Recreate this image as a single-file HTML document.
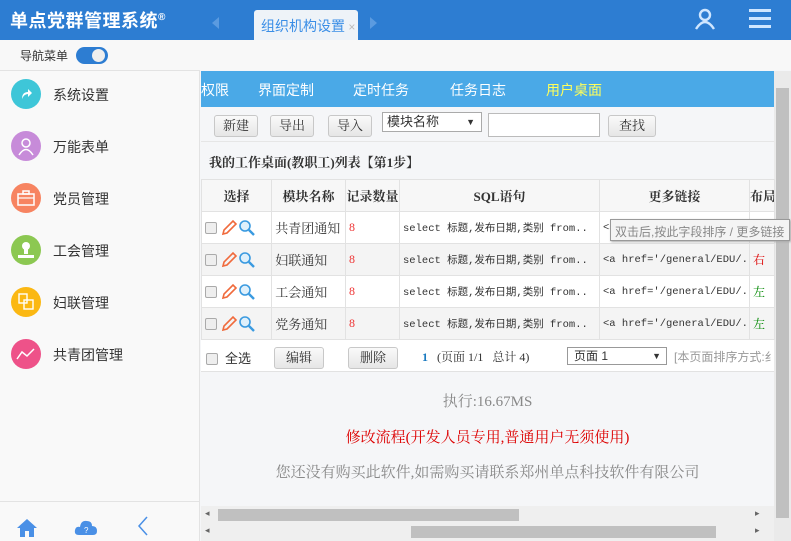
<!DOCTYPE html>
<html><head><meta charset="utf-8"><style>
*{margin:0;padding:0;box-sizing:border-box}
body{width:791px;height:541px;overflow:hidden;font-family:"Liberation Sans","Noto Sans CJK SC",sans-serif;background:#f5f6f8;position:relative;font-size:13px;color:#333}
.abs{position:absolute}
#hdr{left:0;top:0;width:791px;height:40px;background:#2d7dd2}
#title{left:10px;top:7px;color:#fff;font-size:18px;font-weight:bold;letter-spacing:0.5px}
#tab{left:254px;top:10px;width:104px;height:30px;background:#eef3f8;border-radius:3px 3px 0 0;color:#3a8ee6;font-size:14px;padding:6px 0 0 7px}
#bar{left:0;top:40px;width:791px;height:30px;background:#f8f8f8}
#side{left:0;top:70px;width:200px;height:471px;background:#f9f9f9;border-top:1px solid #e3e3e3;border-right:1px solid #e3e3e3}
.mi{position:absolute;left:11px;width:180px;height:30px}
.mi .c{position:absolute;left:0;top:0;width:30px;height:30px;border-radius:50%}
.mi span{position:absolute;left:42px;top:6px;font-size:14px;color:#333}
#nav{left:201px;top:71px;width:573px;height:36px;background:#4aa9e7;color:#fff;font-size:14px}
#nav span{position:absolute;top:9px}
.btn{position:absolute;height:22px;border:1px solid #c8c8c8;border-radius:3px;background:linear-gradient(#fafafa,#e6e6e6);font-size:13px;text-align:center;line-height:20px;font-family:"Liberation Serif","Noto Serif CJK SC",serif}
table{position:absolute;left:201px;top:179px;width:573px;table-layout:fixed;border-collapse:collapse;font-size:12px;font-family:"Liberation Serif","Noto Serif CJK SC",serif}
td,th{border:1px solid #e2e2e2;height:32px;padding:0;white-space:nowrap;overflow:hidden}
th{font-weight:bold;font-size:13px;background:#f7f7f7}
tr.r td{background:#fff}
tr.g td{background:#f4f4f4}
.cb{display:inline-block;width:12px;height:12px;border:1px solid #aaa;border-radius:2px;background:#eee;vertical-align:middle}
.mono{font-family:"Liberation Mono","Noto Sans CJK SC",monospace;font-size:10.5px;padding-left:3px}
.sb{background:#c0c0c0}
.ic{vertical-align:middle}
</style></head><body>
<div id="hdr" class="abs"></div>
<div id="title" class="abs">单点党群管理系统<sup style="font-size:10px">®</sup></div>
<div class="abs" style="left:212px;top:17px;width:0;height:0;border:6px solid transparent;border-right:7px solid #5b9be0;border-left:0"></div>
<div class="abs" style="left:370px;top:17px;width:0;height:0;border:6px solid transparent;border-left:7px solid #5b9be0;border-right:0"></div>
<div id="tab" class="abs">组织机构设置<span style="color:#bbb;font-size:12px"> ×</span></div>
<svg class="abs" style="left:693px;top:7px" width="24" height="24" viewBox="0 0 24 24"><circle cx="12" cy="8" r="5" fill="none" stroke="#cfe6ff" stroke-width="2.4"/><path d="M3 22 Q12 8 21 22" fill="none" stroke="#cfe6ff" stroke-width="2.4"/></svg>
<div class="abs" style="left:749px;top:9px;width:22px;height:3px;background:#cfe6ff;box-shadow:0 8px 0 #cfe6ff,0 16px 0 #cfe6ff"></div>
<div id="bar" class="abs"></div>
<div class="abs" style="left:20px;top:47px;font-size:12px">导航菜单</div>
<div class="abs" style="left:76px;top:47px;width:32px;height:17px;border-radius:9px;background:#2d7dd2"></div>
<div class="abs" style="left:92px;top:49px;width:13px;height:13px;border-radius:50%;background:#eee"></div>
<div id="side" class="abs">
<div class="mi" style="top:8px"><div class="c" style="background:#3ec6d8"></div><svg class="abs" style="left:8px;top:8px" width="14" height="14" viewBox="0 0 14 14"><path d="M3 12 Q3 5 9 5 L9 2 L13 6 L9 10 L9 7 Q5 7 3 12Z" fill="#fff"/></svg><span>系统设置</span></div>
<div class="mi" style="top:60px"><div class="c" style="background:#c78bd9"></div><svg class="abs" style="left:6px;top:5px" width="18" height="20" viewBox="0 0 18 20"><circle cx="9" cy="7" r="4" fill="none" stroke="#fff" stroke-width="1.5"/><path d="M2 19 Q9 8 16 19" fill="none" stroke="#fff" stroke-width="1.5"/></svg><span>万能表单</span></div>
<div class="mi" style="top:112px"><div class="c" style="background:#f78461"></div><svg class="abs" style="left:6px;top:7px" width="18" height="16" viewBox="0 0 18 16"><rect x="1" y="4" width="16" height="11" fill="none" stroke="#fff" stroke-width="1.5"/><rect x="6" y="1" width="6" height="3" fill="none" stroke="#fff" stroke-width="1.5"/><line x1="1" y1="8" x2="17" y2="8" stroke="#fff" stroke-width="1.2"/></svg><span>党员管理</span></div>
<div class="mi" style="top:164px"><div class="c" style="background:#8cc852"></div><svg class="abs" style="left:6px;top:5px" width="18" height="20" viewBox="0 0 18 20"><circle cx="9" cy="6" r="4" fill="#fff"/><rect x="7" y="9" width="4" height="5" fill="#fff"/><rect x="1" y="15" width="16" height="3" fill="#fff"/></svg><span>工会管理</span></div>
<div class="mi" style="top:216px"><div class="c" style="background:#fbb813"></div><svg class="abs" style="left:7px;top:6px" width="16" height="18" viewBox="0 0 16 18"><rect x="1" y="1" width="8" height="9" fill="none" stroke="#fff" stroke-width="1.4"/><rect x="6" y="7" width="9" height="9" fill="none" stroke="#fff" stroke-width="1.4"/></svg><span>妇联管理</span></div>
<div class="mi" style="top:268px"><div class="c" style="background:#ee5289"></div><svg class="abs" style="left:5px;top:8px" width="20" height="14" viewBox="0 0 20 14"><path d="M1 12 L6 5 L11 9 L18 2" fill="none" stroke="#fff" stroke-width="1.5"/></svg><span>共青团管理</span></div>
<div class="abs" style="left:0;top:430px;width:199px;height:1px;background:#e3e3e3"></div>
<svg class="abs" style="left:16px;top:447px" width="22" height="20" viewBox="0 0 22 20"><path d="M11 1 L21 10 L18 10 L18 19 L13 19 L13 13 L9 13 L9 19 L4 19 L4 10 L1 10Z" fill="#4a90e6"/></svg>
<svg class="abs" style="left:74px;top:446px" width="24" height="20" viewBox="0 0 24 20"><path d="M5 18 Q0 18 1 13 Q2 9 6 10 Q7 3 13 4 Q18 4 18 9 Q23 9 23 14 Q23 18 19 18Z" fill="#4a90e6"/><text x="10" y="16" font-size="8" fill="#fff" font-family="Liberation Sans">?</text></svg>
<svg class="abs" style="left:137px;top:444px" width="12" height="22" viewBox="0 0 12 22"><path d="M10 2 L2 11 L10 20" fill="none" stroke="#4a90e6" stroke-width="1.5"/></svg>
</div>
<div id="nav" class="abs"><span style="left:0">权限</span><span style="left:57px">界面定制</span><span style="left:152px">定时任务</span><span style="left:249px">任务日志</span><span style="left:345px;color:#ffff5a">用户桌面</span></div>
<div class="abs" style="left:774px;top:71px;width:17px;height:470px;background:#eaeaea"></div>
<div class="abs sb" style="left:776px;top:88px;width:13px;height:430px"></div>
<div class="btn" style="left:214px;top:115px;width:44px">新建</div>
<div class="btn" style="left:270px;top:115px;width:44px">导出</div>
<div class="btn" style="left:328px;top:115px;width:44px">导入</div>
<div class="abs" style="left:382px;top:112px;width:100px;height:20px;border:1px solid #aaa;background:#fff;font-size:13px;padding-left:4px;line-height:18px">模块名称<span style="position:absolute;right:6px;font-size:9px">▼</span></div>
<div class="abs" style="left:488px;top:113px;width:112px;height:24px;border:1px solid #bbb;background:#fff"></div>
<div class="btn" style="left:608px;top:115px;width:48px">查找</div>
<div class="abs" style="left:201px;top:141px;width:573px;height:1px;background:#e6e6e6"></div>
<div class="abs" style="left:209px;top:152px;font-size:13px;font-weight:bold;font-family:'Liberation Serif','Noto Serif CJK SC',serif">我的工作桌面(教职工)列表【第1步】</div>
<table>
<colgroup><col style="width:70px"><col style="width:74px"><col style="width:54px"><col style="width:200px"><col style="width:150px"><col style="width:25px"></colgroup>
<tr><th>选择</th><th>模块名称</th><th>记录数量</th><th>SQL语句</th><th>更多链接</th><th>布局</th></tr>
<tr class="r"><td>&nbsp;<span class="cb"></span> <svg class="ic" width="18" height="18" viewBox="0 0 18 18"><path d="M3 15 L4 11 L13 2 L16 5 L7 14Z" fill="none" stroke="#f06a3c" stroke-width="1.6"/></svg><svg class="ic" width="18" height="18" viewBox="0 0 18 18"><circle cx="7" cy="7" r="5" fill="#dff0fb" stroke="#3a9ae0" stroke-width="1.6"/><path d="M11 11 L16 16" stroke="#3a9ae0" stroke-width="2.4"/></svg></td><td style="font-size:13px">&nbsp;共青团通知</td><td style="color:#e33">&nbsp;8</td><td class="mono">select 标题,发布日期,类别 from..</td><td class="mono">&lt;a href='/general/EDU/..</td><td style="color:#d00">&nbsp;右</td></tr>
<tr class="g"><td>&nbsp;<span class="cb"></span> <svg class="ic" width="18" height="18" viewBox="0 0 18 18"><path d="M3 15 L4 11 L13 2 L16 5 L7 14Z" fill="none" stroke="#f06a3c" stroke-width="1.6"/></svg><svg class="ic" width="18" height="18" viewBox="0 0 18 18"><circle cx="7" cy="7" r="5" fill="#dff0fb" stroke="#3a9ae0" stroke-width="1.6"/><path d="M11 11 L16 16" stroke="#3a9ae0" stroke-width="2.4"/></svg></td><td style="font-size:13px">&nbsp;妇联通知</td><td style="color:#e33">&nbsp;8</td><td class="mono">select 标题,发布日期,类别 from..</td><td class="mono">&lt;a href='/general/EDU/..</td><td style="color:#d00">&nbsp;右</td></tr>
<tr class="r"><td>&nbsp;<span class="cb"></span> <svg class="ic" width="18" height="18" viewBox="0 0 18 18"><path d="M3 15 L4 11 L13 2 L16 5 L7 14Z" fill="none" stroke="#f06a3c" stroke-width="1.6"/></svg><svg class="ic" width="18" height="18" viewBox="0 0 18 18"><circle cx="7" cy="7" r="5" fill="#dff0fb" stroke="#3a9ae0" stroke-width="1.6"/><path d="M11 11 L16 16" stroke="#3a9ae0" stroke-width="2.4"/></svg></td><td style="font-size:13px">&nbsp;工会通知</td><td style="color:#e33">&nbsp;8</td><td class="mono">select 标题,发布日期,类别 from..</td><td class="mono">&lt;a href='/general/EDU/..</td><td style="color:#080">&nbsp;左</td></tr>
<tr class="g"><td>&nbsp;<span class="cb"></span> <svg class="ic" width="18" height="18" viewBox="0 0 18 18"><path d="M3 15 L4 11 L13 2 L16 5 L7 14Z" fill="none" stroke="#f06a3c" stroke-width="1.6"/></svg><svg class="ic" width="18" height="18" viewBox="0 0 18 18"><circle cx="7" cy="7" r="5" fill="#dff0fb" stroke="#3a9ae0" stroke-width="1.6"/><path d="M11 11 L16 16" stroke="#3a9ae0" stroke-width="2.4"/></svg></td><td style="font-size:13px">&nbsp;党务通知</td><td style="color:#e33">&nbsp;8</td><td class="mono">select 标题,发布日期,类别 from..</td><td class="mono">&lt;a href='/general/EDU/..</td><td style="color:#080">&nbsp;左</td></tr>
</table>
<div class="abs" style="left:201px;top:340px;width:573px;height:32px;background:#fff;border-bottom:1px solid #e2e2e2"></div>
<div class="abs" style="left:206px;top:350px"><span class="cb"></span></div>
<div class="abs" style="left:225px;top:348px;font-size:13px">全选</div>
<div class="btn" style="left:274px;top:347px;width:50px">编辑</div>
<div class="btn" style="left:348px;top:347px;width:50px">删除</div>
<div class="abs" style="left:422px;top:348px;font-size:12px;font-family:'Liberation Serif','Noto Serif CJK SC',serif"><b style="color:#1a7ac0">1</b>&nbsp;&nbsp; (页面 1/1&nbsp;&nbsp; 总计 4)</div>
<div class="abs" style="left:567px;top:347px;width:100px;height:18px;border:1px solid #999;background:#fff;font-size:12px;padding-left:6px;line-height:16px">页面 1<span style="position:absolute;right:5px;font-size:9px">▼</span></div>
<div class="abs" style="left:674px;top:348px;font-size:12px;color:#999;white-space:nowrap;width:100px;overflow:hidden">[本页面排序方式:纟</div>
<div class="abs" style="left:610px;top:219px;width:180px;height:22px;background:#f4f4f4;border:1px solid #999;box-shadow:1px 1px 2px #aaa;font-size:12px;color:#888;padding:3px 0 0 4px;white-space:nowrap">双击后,按此字段排序 / 更多链接</div>
<div class="abs" style="left:201px;top:390px;width:573px;text-align:center;font-size:15px;color:#888;font-family:'Liberation Serif','Noto Serif CJK SC',serif">执行:16.67MS</div>
<div class="abs" style="left:201px;top:426px;width:573px;text-align:center;font-size:15px;color:#d00;font-family:'Liberation Serif','Noto Serif CJK SC',serif">修改流程(开发人员专用,普通用户无须使用)</div>
<div class="abs" style="left:201px;top:461px;width:573px;text-align:center;font-size:15px;color:#888;font-family:'Liberation Serif','Noto Serif CJK SC',serif">您还没有购买此软件,如需购买请联系郑州单点科技软件有限公司</div>
<div class="abs" style="left:201px;top:506px;width:573px;height:35px;background:#efefef"></div>
<div class="abs sb" style="left:218px;top:509px;width:301px;height:12px"></div>
<div class="abs sb" style="left:411px;top:526px;width:305px;height:12px"></div>
<div class="abs" style="left:205px;top:508px;font-size:9px;color:#666">◂</div>
<div class="abs" style="left:205px;top:525px;font-size:9px;color:#666">◂</div>
<div class="abs" style="left:755px;top:508px;font-size:9px;color:#666">▸</div>
<div class="abs" style="left:755px;top:525px;font-size:9px;color:#666">▸</div>
</body></html>
